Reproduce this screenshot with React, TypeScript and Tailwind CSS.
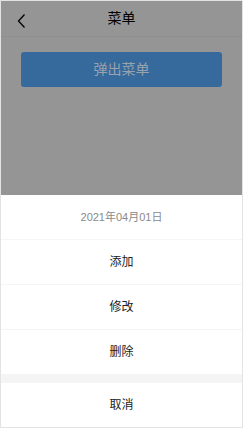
const actions = ['添加', '修改', '删除'];

export default function App() {
  return (
    <div className="w-[245px] h-[430px] bg-white" style={{ fontFamily: '"Liberation Sans", "Noto Sans CJK SC", sans-serif' }}>
      <div className="w-[243px] h-[428px] border border-[#e3e3e3] flex flex-col overflow-hidden">
        {/* Page under the mask */}
        <div className="flex-1 bg-[#959595]">
          <div className="relative h-[36px] flex items-center justify-center border-b border-[#8f8f8f]">
            <svg className="absolute left-[15px] top-[12px]" width="12" height="16" viewBox="0 0 12 16" fill="none">
              <path d="M8.5 1.5 L2.5 8 L8.5 14.5" stroke="#000" strokeWidth="1.3" />
            </svg>
            <span className="text-[14px] text-black">菜单</span>
          </div>
          <div className="px-[20px] pt-[15px]">
            <button className="w-full h-[35px] rounded-[3px] bg-[#366a9c] text-[14px] text-[#9aa3ad]">
              弹出菜单
            </button>
          </div>
        </div>

        {/* Action sheet */}
        <div className="bg-white">
          <div className="h-[45px] flex items-center justify-center text-[11px] text-[#8a8a8a] border-b border-[#f5f5f5]">
            2021年04月01日
          </div>
          {actions.map((a) => (
            <div key={a} className="h-[45px] flex items-center justify-center text-[12px] text-[#222] border-b border-[#f5f5f5] last:border-b-0">
              {a}
            </div>
          ))}
          <div className="h-[8px] bg-[#f4f4f4]" />
          <div className="h-[44px] flex items-center justify-center text-[12px] text-[#222]">取消</div>
        </div>
      </div>
    </div>
  );
}
